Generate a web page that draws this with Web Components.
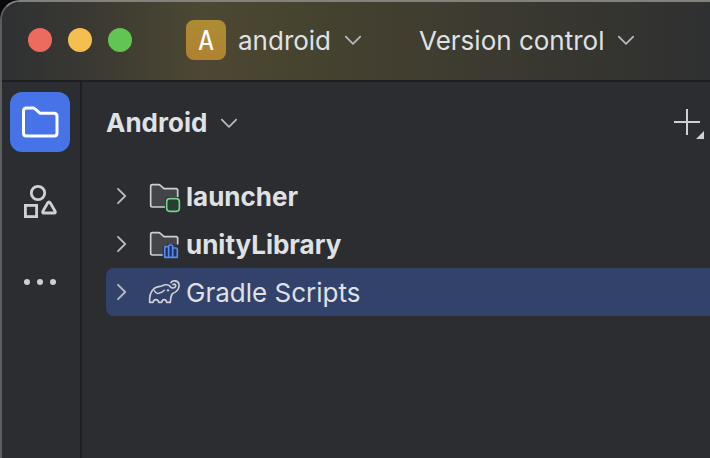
<!DOCTYPE html>
<html lang="en">
<head>
  <meta charset="UTF-8">
  <meta name="viewport" content="width=device-width, initial-scale=1.0">
  <title>android</title>
  <style>
    body {
      margin: 0;
      background-color: #08080c;
      color: #dfe1e5;
      font-family: Inter, sans-serif;
      font-size: 26px;
      line-height: 32px;
    }
  </style>
</head>
<body>
  <ide-window>
    <title-bar slot="title" project="android" vcs="Version control"></title-bar>
    <tool-strip slot="strip"></tool-strip>
    <project-panel view="Android">
      <tree-row icon="app" strong>launcher</tree-row>
      <tree-row icon="library" strong>unityLibrary</tree-row>
      <tree-row icon="gradle" selected>Gradle Scripts</tree-row>
    </project-panel>
  </ide-window>

  <script>
    const baseStyles = `
      * {
        box-sizing: border-box;
      }
      button {
        display: flex;
        align-items: center;
        margin: 0;
        padding: 0;
        border: 0;
        background: none;
        color: inherit;
        font: inherit;
        cursor: pointer;
      }
      svg {
        display: block;
        flex: none;
        fill: none;
        stroke-linecap: round;
        stroke-linejoin: round;
      }
      .label {
        padding-top: 2px;
      }
    `;

    const chevronDown = `
      <svg width="20" height="20" viewBox="0 0 20 20" stroke="#b4b8bf" stroke-width="1.8" aria-hidden="true">
        <path d="M2.8 6.6 10 13.8l7.2-7.2"/>
      </svg>
    `;

    const rowIcons = {
      app: `
        <path d="M198 111H157q-5 0-5-5V49q0-5 5-5h19q3 0 5 2l11 10h36q5 0 5 5v19" fill="#43454a" stroke="#ced0d6"/>
        <path d="M200 111V96q0-14 14-14h20v29z" fill="#43454a" stroke="none"/>
        <rect x="195" y="81" width="48" height="48" rx="11" fill="#2b2d30" stroke="none"/>
        <rect x="200" y="86" width="38" height="38" rx="9" fill="#2b3d33" stroke="#6fd58c"/>
      `,
      library: `
        <path d="M190 111H157q-5 0-5-5V49q0-5 5-5h19q3 0 5 2l11 10h36q5 0 5 5v17" fill="#43454a" stroke="#ced0d6"/>
        <path d="M188 116V87h13v-9h22v8h15v34h-50z" fill="#2b2d30" stroke="none"/>
        <path d="M194 118V90q0-4 4-4h8v-1q0-4 4-4h4q4 0 4 4v5h10q4 0 4 4v24zM206 86v32M218 90v28" fill="#25324d" stroke="#548af7"/>
      `,
      gradle: `
        <path stroke="#ced0d6" d="M213 50C217 42 233 42 237 54C239 67 230 78 217 83C212 90 212 98 211 109H200C199 98 187 98 185 109H176C175 98 161 98 159 109H149C148 91 152 76 162 68C168 61 178 63 187 59C196 54 207 56 211 62C215 68 224 67 227 61C228 55 223 52 219 56"/>
        <path stroke="#ced0d6" stroke-width="4.500" d="M163 74C167 81 173 85 178 81C184 80 189 77 193 73"/>
        <circle cx="204" cy="73" r="3.500" fill="#ced0d6" stroke="none"/>
      `
    };

    class IdeWindow extends HTMLElement {
      constructor() {
        super();
        this.attachShadow({ mode: "open" });
      }

      connectedCallback() {
        this.shadowRoot.innerHTML = `
          <style>
            ${baseStyles}
            :host {
              display: flex;
              flex-direction: column;
              box-sizing: border-box;
              min-height: 100vh;
              overflow: hidden;
              border-top: 2px solid #83817b;
              border-left: 2px solid #5c5d5f;
              border-top-left-radius: 20px;
              background-color: #2b2d30;
            }
            main {
              display: flex;
              flex: 1;
            }
            ::slotted(project-panel) {
              flex: 1;
              min-width: 0;
            }
          </style>
          <slot name="title"></slot>
          <main>
            <slot name="strip"></slot>
            <slot></slot>
          </main>
        `;
      }
    }

    class TitleBar extends HTMLElement {
      constructor() {
        super();
        this.attachShadow({ mode: "open" });
      }

      connectedCallback() {
        const project = this.getAttribute("project");

        this.shadowRoot.innerHTML = `
          <style>
            ${baseStyles}
            :host {
              display: block;
              border-bottom: 2px solid #1e1f22;
              background: linear-gradient(90deg, #2e3032 0%, #3c3a32 14%, #4d4834 28%, #46432f 42%, #403d31 60%, #37362f 80%, #2f3031 100%);
            }
            header {
              display: flex;
              align-items: center;
              padding: 18px 26px 20px;
              white-space: nowrap;
            }
            .lights {
              display: flex;
              gap: 16px;
              margin-right: 54px;
            }
            .lights button {
              width: 24px;
              height: 24px;
              border-radius: 50%;
            }
            .close { background-color: #ed6a5e; }
            .minimize { background-color: #f5bf4f; }
            .zoom { background-color: #61c554; }
            .project {
              gap: 12px;
              margin-right: 56px;
            }
            .vcs {
              gap: 12px;
            }
            .badge {
              width: 40px;
              height: 40px;
              border-radius: 8px;
              background: linear-gradient(20deg, #b08030, #ac8e34);
              color: #fff;
              font-family: "DejaVu Sans Mono", monospace;
              line-height: 42px;
              text-align: center;
            }
          </style>
          <header>
            <div class="lights">
              <button class="close" aria-label="Close"></button>
              <button class="minimize" aria-label="Minimize"></button>
              <button class="zoom" aria-label="Zoom"></button>
            </div>
            <button class="project">
              <span class="badge">${project[0].toUpperCase()}</span>
              <span class="label">${project}</span>
              ${chevronDown}
            </button>
            <button class="vcs">
              <span class="label">${this.getAttribute("vcs")}</span>
              ${chevronDown}
            </button>
          </header>
        `;
      }
    }

    class ToolStrip extends HTMLElement {
      constructor() {
        super();
        this.attachShadow({ mode: "open" });
      }

      connectedCallback() {
        this.shadowRoot.innerHTML = `
          <style>
            ${baseStyles}
            :host {
              display: block;
              border-right: 2px solid #1e1f22;
            }
            nav {
              display: flex;
              flex-direction: column;
              gap: 20px;
              padding: 10px 10px 10px 8px;
            }
            button {
              justify-content: center;
              width: 60px;
              height: 60px;
              border-radius: 12px;
            }
            .active {
              background-color: #4674e8;
            }
          </style>
          <nav>
            <button class="active" aria-label="Project">
              <svg width="40" height="40" viewBox="0 0 40 40" stroke="#fff" stroke-width="3">
                <path d="M3.5 9q0-3 3-3h6q1.600 0 2.700 1l4.600 4.200H34q3 0 3 3V31q0 3-3 3H6.500q-3 0-3-3z"/>
              </svg>
            </button>
            <button aria-label="Resource Manager">
              <svg width="40" height="40" viewBox="0 0 40 40" stroke="#ced0d6" stroke-width="2.800">
                <circle cx="18" cy="11" r="6.700"/>
                <rect x="5.400" y="23.400" width="11.200" height="11.200" stroke-linejoin="miter"/>
                <path d="M27.800 20.800q1.200-2 2.400 0l4.900 8.400q.9 1.800-1 1.800H23.900q-1.900 0-1-1.800z"/>
              </svg>
            </button>
            <button aria-label="More tool windows">
              <svg width="40" height="40" viewBox="0 0 40 40">
                <g fill="#ced0d6">
                  <circle cx="7" cy="20" r="3"/>
                  <circle cx="20" cy="20" r="3"/>
                  <circle cx="33" cy="20" r="3"/>
                </g>
              </svg>
            </button>
          </nav>
        `;
      }
    }

    class ProjectPanel extends HTMLElement {
      constructor() {
        super();
        this.attachShadow({ mode: "open" });
      }

      connectedCallback() {
        this.shadowRoot.innerHTML = `
          <style>
            ${baseStyles}
            :host {
              display: block;
            }
            header {
              display: flex;
              justify-content: space-between;
              align-items: center;
              height: 82px;
              padding: 0 4px 0 24px;
            }
            h2 {
              margin: 0;
              font-size: 26px;
              font-weight: 700;
            }
            .view {
              gap: 12px;
            }
            .tree {
              padding: 8px 0 0 24px;
            }
          </style>
          <header>
            <button class="view">
              <h2>${this.getAttribute("view")}</h2>
              ${chevronDown}
            </button>
            <button aria-label="Add">
              <svg width="36" height="40" viewBox="60 36 108 120">
                <path d="M72 93h78M111 54v78" stroke="#ced0d6" stroke-width="6" stroke-linecap="butt"/>
                <path d="M162 120v24h-24z" fill="#ced0d6"/>
              </svg>
            </button>
          </header>
          <div class="tree">
            <slot></slot>
          </div>
        `;
      }
    }

    class TreeRow extends HTMLElement {
      constructor() {
        super();
        this.attachShadow({ mode: "open" });
      }

      connectedCallback() {
        this.shadowRoot.innerHTML = `
          <style>
            ${baseStyles}
            :host {
              display: block;
            }
            :host([strong]) {
              font-weight: 700;
            }
            button {
              width: 100%;
              height: 48px;
              padding-left: 4px;
              border-radius: 8px 0 0 8px;
              white-space: nowrap;
            }
            :host([selected]) button {
              background-color: #33426b;
            }
            .icon {
              margin: 0 6px 0 14px;
            }
          </style>
          <button aria-expanded="false">
            <svg width="24" height="24" viewBox="0 0 24 24" stroke="#b4b8bf" stroke-width="1.900" aria-hidden="true">
              <path d="M8 4.800 15.200 12 8 19.200"/>
            </svg>
            <svg class="icon" width="32" height="32" viewBox="144 30 96 96" overflow="visible" stroke-width="5" aria-hidden="true">
              ${rowIcons[this.getAttribute("icon")]}
            </svg>
            <span class="label"><slot></slot></span>
          </button>
        `;
      }
    }

    customElements.define("ide-window", IdeWindow);
    customElements.define("title-bar", TitleBar);
    customElements.define("tool-strip", ToolStrip);
    customElements.define("project-panel", ProjectPanel);
    customElements.define("tree-row", TreeRow);
  </script>
</body>
</html>
